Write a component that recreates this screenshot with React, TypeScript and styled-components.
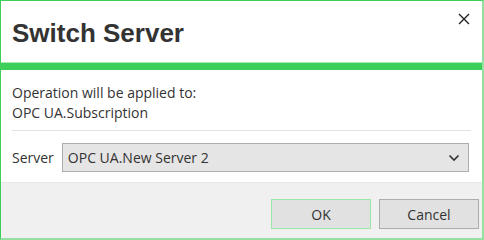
import { createGlobalStyle, styled } from 'styled-components'

const GlobalStyle = createGlobalStyle`
  html, body {
    margin: 0;
    padding: 0;
    background: #ffffff;
  }
  body {
    font-family: "Open Sans", "Noto Sans", sans-serif;
    color: #333333;
  }
`

type ButtonProps = {
  $primary?: boolean
}

export default function App() {
  return <>
    <GlobalStyle />
    <Dialog>
      <Header>
        <Title>Switch Server</Title>
        <CloseButton type="button" aria-label="Close">
          <svg width="12" height="12" viewBox="0 0 12 12">
            <path d="M1 1 L11 11 M11 1 L1 11" stroke="#222" strokeWidth="1.4" fill="none" />
          </svg>
        </CloseButton>
      </Header>
      <AccentBar />

      <Body>
        <Info>
          <div>Operation will be applied to:</div>
          <div>OPC UA.Subscription</div>
        </Info>
        <Divider />
        <FieldRow>
          <Label>Server</Label>
          <SelectBox>
            <span>OPC UA.New Server 2</span>
            <svg width="12" height="8" viewBox="0 0 12 8">
              <path d="M1.5 1.5 L6 6 L10.5 1.5" stroke="#333" strokeWidth="1.6" fill="none" />
            </svg>
          </SelectBox>
        </FieldRow>
      </Body>

      <Footer>
        <Button type="button" $primary>OK</Button>
        <Button type="button">Cancel</Button>
      </Footer>
    </Dialog>
  </>
}

const Dialog = styled.div`
  box-sizing: border-box;
  width: 484px;
  height: 240px;
  display: flex;
  flex-direction: column;
  border-left: 1px solid #3ecf5a;
  border-top: 1px solid #3ecf5a;
  border-right: 2px solid #94e0a1;
  border-bottom: 2px solid #94e0a1;
  background: #ffffff;
`
const Header = styled.div`
  height: 61px;
  display: flex;
  justify-content: space-between;
  align-items: flex-start;
  padding: 0 11px 0 11px;
  border-bottom: 1px solid #a8eab3;
`
const Title = styled.h1`
  margin: 17px 0 0;
  font-family: "Liberation Sans", Arial, sans-serif;
  font-size: 26px;
  font-weight: bold;
  line-height: 30px;
  color: #333333;
`
const CloseButton = styled.button`
  margin-top: 12px;
  margin-right: 1px;
  padding: 0;
  border: none;
  background: transparent;
  width: 12px;
  height: 12px;
  display: flex;
`
const AccentBar = styled.div`
  height: 7px;
  background: #3ecf5a;
`
const Body = styled.div`
  padding: 13px 11px 10px;
  font-size: 14px;
`
const Info = styled.div`
  line-height: 20px;
`
const Divider = styled.div`
  height: 1px;
  background: #e3e3e3;
  margin: 7px 0 12px;
`
const FieldRow = styled.div`
  display: flex;
  align-items: center;
  gap: 8px;
`
const Label = styled.span`
  font-size: 14px;
`
const SelectBox = styled.div`
  box-sizing: border-box;
  flex: 1;
  height: 29px;
  margin-right: 2px;
  display: flex;
  align-items: center;
  justify-content: space-between;
  padding: 0 8px 0 5px;
  background: #e5e5e5;
  border: 1px solid #adadad;
  font-size: 14px;
`
const Footer = styled.div`
  flex: 1;
  display: flex;
  justify-content: flex-end;
  align-items: flex-start;
  gap: 8px;
  padding: 16px 3px 0 0;
  background: #f0f0f0;
  border-top: 1px solid #e8e8e8;
`
const Button = styled.button<ButtonProps>`
  box-sizing: border-box;
  width: 100px;
  height: 30px;
  font-family: inherit;
  font-size: 14px;
  color: #333333;
  background: #e1e1e1;
  border: 1px solid ${p => p.$primary ? '#9be7a8' : '#adadad'};
`
